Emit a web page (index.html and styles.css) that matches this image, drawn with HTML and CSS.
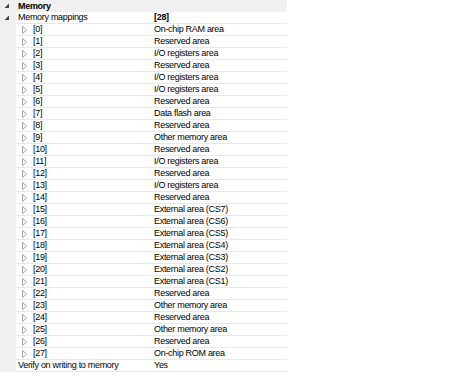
FILE: index.html
```html
<!DOCTYPE html>
<html>
<head>
<meta charset="utf-8">
<link rel="stylesheet" href="styles.css">
</head>
<body>
<div class="grid">
  <div class="row cat">
    <div class="gut"><svg class="exp" width="6" height="6" viewBox="0 0 6 6"><polygon points="5,0.5 5,5 0.5,5" /></svg></div>
    <div class="name bold">Memory</div>
    <div class="val"></div>
  </div>
  <div class="row">
    <div class="gut"><svg class="exp" width="6" height="6" viewBox="0 0 6 6"><polygon points="5,0.5 5,5 0.5,5" /></svg></div>
    <div class="name">Memory mappings</div>
    <div class="val bold">[28]</div>
  </div>
  <div id="items"></div>
  <div class="row">
    <div class="gut"></div>
    <div class="name">Verify on writing to memory</div>
    <div class="val">Yes</div>
  </div>
</div>
<script src="app.js"></script>
</body>
</html>
```

FILE: app.js
```js
var vals = ["On-chip RAM area","Reserved area","I/O registers area","Reserved area","I/O registers area","I/O registers area","Reserved area","Data flash area","Reserved area","Other memory area","Reserved area","I/O registers area","Reserved area","I/O registers area","Reserved area","External area (CS7)","External area (CS6)","External area (CS5)","External area (CS4)","External area (CS3)","External area (CS2)","External area (CS1)","Reserved area","Other memory area","Reserved area","Other memory area","Reserved area","On-chip ROM area"];
var host = document.getElementById('items');
var html = '';
for (var i = 0; i < vals.length; i++) {
  html += '<div class="row"><div class="gut"></div><div class="name sub">' +
    '<svg class="col" width="6" height="8" viewBox="0 0 6 8"><polygon points="0.5,0.5 4.5,4 0.5,7.5" /></svg>' +
    '<span>[' + i + ']</span></div><div class="val">' + vals[i] + '</div></div>';
}
host.outerHTML = html;
```

FILE: styles.css
```css
html, body {
  margin: 0;
  padding: 0;
  background: #ffffff;
}
body {
  font-family: "Liberation Sans", Arial, sans-serif;
  font-size: 9px;
  letter-spacing: -0.3px;
  color: #000000;
}
.grid {
  width: 287px;
  display: flex;
  flex-direction: column;
}
.row {
  display: flex;
  height: 12px;
  line-height: 11px;
}
.row .name, .row .val {
  border-bottom: 1px solid #e8e8e8;
  box-sizing: border-box;
  height: 12px;
}
.gut {
  width: 16px;
  flex: none;
  background: #f0f0f0;
  position: relative;
}
.exp {
  position: absolute;
  left: 4px;
  top: 3px;
  fill: #404040;
}
.name {
  width: 138px;
  flex: none;
  padding-left: 2px;
  box-sizing: border-box;
  white-space: nowrap;
  display: flex;
  align-items: center;
}
.val {
  flex: 1;
  padding-left: 0;
  white-space: nowrap;
  display: flex;
  align-items: center;
}
.cat {
  background: #f0f0f0;
  height: 12px;
}
.cat .name, .cat .val {
  border-bottom: none;
}
.bold {
  font-weight: bold;
}
.sub {
  padding-left: 6px;
}
.col {
  fill: none;
  stroke: #a8a8a8;
  stroke-width: 1;
  margin-right: 5px;
}
```
